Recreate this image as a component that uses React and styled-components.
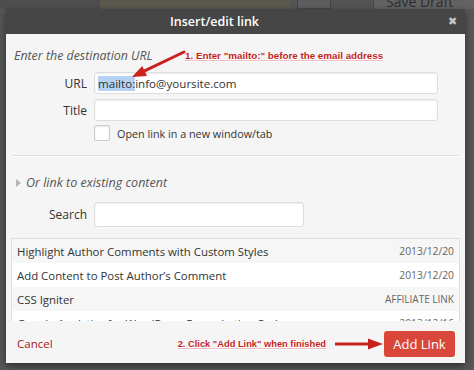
import React from 'react';
import styled, { createGlobalStyle } from 'styled-components';

const GlobalStyle = createGlobalStyle`
  html, body {
    margin: 0;
    padding: 0;
    background: #565656;
    font-family: "Open Sans", "Liberation Sans", sans-serif;
  }
  * { box-sizing: border-box; }
`;

const results = [
  { title: 'Highlight Author Comments with Custom Styles', info: '2013/12/20' },
  { title: 'Add Content to Post Author\u2019s Comment', info: '2013/12/20' },
  { title: 'CSS Igniter', info: 'AFFILIATE LINK', upper: true },
  { title: 'Google Analytics for WordPress Remarketing Code', info: '2013/12/16' },
];

const App = () => (
  <Page>
    <GlobalStyle />
    <TopStrip>
      <StripBlock $w={100} $bg="#4f4f4f" />
      <StripBlock $w={190} $bg="#5c5a4e" />
      <StripBlock $w={7} $bg="#555" />
      <StripButton $w={34} />
      <StripBlock $w={42} $bg="#555" />
      <SaveDraft>Save Draft</SaveDraft>
    </TopStrip>

    <Modal>
      <Header>
        <HeaderTitle>Insert/edit link</HeaderTitle>
        <Close>&#x2716;</Close>
      </Header>

      <Body>
        <HeadingRow>
          <Heading>Enter the destination URL</Heading>
          <Note>1. Enter "mailto:" before the email address</Note>
        </HeadingRow>

        <FieldRow>
          <Label>URL</Label>
          <Field $w={344} $h={22}>
            <Selected>mailto:</Selected>info@yoursite.com
          </Field>
        </FieldRow>
        <FieldRow $mt={5}>
          <Label>Title</Label>
          <Field $w={344} $h={22} />
        </FieldRow>
        <CheckRow>
          <Check />
          <CheckLabel>Open link in a new window/tab</CheckLabel>
        </CheckRow>

        <Separator />

        <Toggle>
          <Triangle />
          <ToggleText>Or link to existing content</ToggleText>
        </Toggle>

        <FieldRow $mt={11}>
          <Label>Search</Label>
          <Field $w={210} $h={25} />
        </FieldRow>

        <Results>
          {results.map((r, i) => (
            <ResultRow key={r.title} $alt={i % 2 === 0}>
              <ResultTitle>{r.title}</ResultTitle>
              <ResultInfo $upper={r.upper}>{r.info}</ResultInfo>
            </ResultRow>
          ))}
        </Results>

        <ArrowOne width="64" height="40" viewBox="0 0 64 40">
          <line x1="54" y1="3" x2="14.6" y2="21.9" stroke="#c9211d" strokeWidth="3" strokeLinecap="round" />
          <polygon points="2,28 17,26.9 12.2,17" fill="#c9211d" />
        </ArrowOne>
      </Body>

      <Footer>
        <Cancel>Cancel</Cancel>
        <FooterRight>
          <Note $size={9.3}>2. Click "Add Link" when finished</Note>
          <svg width="48" height="12" viewBox="0 0 48 12">
            <line x1="1" y1="6" x2="35" y2="6" stroke="#c9211d" strokeWidth="3" strokeLinecap="round" />
            <polygon points="33,0.5 48,6 33,11.5" fill="#c9211d" />
          </svg>
          <AddButton>Add Link</AddButton>
        </FooterRight>
      </Footer>
    </Modal>
  </Page>
);

export default App;

const Page = styled.div`
  width: 474px;
  height: 370px;
  overflow: hidden;
  background: #585858;
`;

const TopStrip = styled.div`
  display: flex;
  height: 9px;
  background: #555;
`;

const StripBlock = styled.div`
  width: ${(p) => p.$w}px;
  background: ${(p) => p.$bg};
`;

const StripButton = styled.div`
  width: ${(p) => p.$w}px;
  background: #5e5e5e;
  border: 1px solid #484848;
  border-top: none;
`;

const SaveDraft = styled.div`
  flex: 1;
  height: 9px;
  overflow: hidden;
  background: #636363;
  border-left: 1px solid #4a4a4a;
  color: #2e2e2e;
  font-size: 14px;
  line-height: 1;
  padding-left: 12px;
  display: flex;
  align-items: flex-end;
`;

const Modal = styled.div`
  position: relative;
  margin-left: 6px;
  width: 459px;
  height: 354px;
  background: #f5f5f5;
  box-shadow: 0 3px 8px rgba(0, 0, 0, 0.5);
  display: flex;
  flex-direction: column;
`;

const Header = styled.div`
  height: 25px;
  background: #464646;
  display: flex;
  align-items: center;
  justify-content: center;
  position: relative;
  padding-right: 42px;
`;

const HeaderTitle = styled.div`
  color: #fff;
  font-size: 12.5px;
  font-weight: 600;
`;

const Close = styled.span`
  position: absolute;
  right: 8px;
  top: 6px;
  color: #c4c4c4;
  font-size: 11px;
  line-height: 1;
`;

const Body = styled.div`
  position: relative;
  padding: 0 5px;
  display: flex;
  flex-direction: column;
`;

const HeadingRow = styled.div`
  display: flex;
  align-items: center;
  height: 38px;
  padding: 4px 0 0 3px;
`;

const Heading = styled.div`
  font-style: italic;
  font-size: 12.4px;
  color: #555;
  width: 171px;
`;

const Note = styled.span`
  font-family: "Liberation Sans", Arial, sans-serif;
  font-weight: bold;
  font-size: ${(p) => p.$size || 9.8}px;
  color: #c41f1c;
  text-shadow: 0 0 1px #fff, 0 1px 0 #fff;
  text-decoration: underline;
  text-decoration-color: rgba(200, 40, 40, 0.3);
  white-space: nowrap;
`;

const FieldRow = styled.div`
  display: flex;
  align-items: center;
  gap: 7px;
  margin-top: ${(p) => p.$mt || 0}px;
`;

const Label = styled.label`
  width: 76px;
  text-align: right;
  font-size: 12px;
  color: #333;
`;

const Field = styled.div`
  width: ${(p) => p.$w}px;
  height: ${(p) => p.$h}px;
  background: #fff;
  border: 1px solid #ddd;
  border-radius: 3px;
  box-shadow: inset 0 1px 2px rgba(0, 0, 0, 0.07);
  font-size: 11.6px;
  color: #333;
  display: flex;
  align-items: center;
  padding-left: 3px;
  white-space: nowrap;
`;

const Selected = styled.span`
  background: #b5d2f5;
`;

const CheckRow = styled.div`
  display: flex;
  align-items: center;
  gap: 7px;
  margin: 4px 0 0 83px;
`;

const Check = styled.span`
  width: 16px;
  height: 16px;
  background: #fff;
  border: 1px solid #ccc;
  border-radius: 2px;
  box-shadow: inset 0 1px 2px rgba(0, 0, 0, 0.1);
`;

const CheckLabel = styled.span`
  font-size: 10.8px;
  color: #333;
`;

const Separator = styled.div`
  margin: 14px 1px 0;
  height: 2px;
  border-top: 1px solid #dfdfdf;
  border-bottom: 1px solid #fff;
`;

const Toggle = styled.div`
  display: flex;
  align-items: center;
  gap: 5px;
  margin-top: 17px;
  padding-left: 5px;
`;

const Triangle = styled.span`
  width: 0;
  height: 0;
  border-left: 5px solid #b4b4b4;
  border-top: 4px solid transparent;
  border-bottom: 4px solid transparent;
`;

const ToggleText = styled.span`
  font-style: italic;
  font-size: 12.5px;
  color: #555;
`;

const Results = styled.div`
  margin-top: 11px;
  height: 83px;
  overflow: hidden;
  background: #fff;
  border: 1px solid #dedede;
  border-bottom: none;
`;

const ResultRow = styled.div`
  display: flex;
  justify-content: space-between;
  align-items: center;
  height: 24px;
  padding: 0 5px;
  background: ${(p) => (p.$alt ? '#f6f6f6' : '#fff')};
`;

const ResultTitle = styled.span`
  font-size: 11.4px;
  color: #333;
  white-space: nowrap;
`;

const ResultInfo = styled.span`
  font-size: ${(p) => (p.$upper ? 10 : 10.3)}px;
  color: #666;
  white-space: nowrap;
`;

const ArrowOne = styled.svg`
  position: absolute;
  left: 124px;
  top: 15px;
  pointer-events: none;
`;

const Footer = styled.div`
  flex: 1;
  display: flex;
  align-items: center;
  justify-content: space-between;
  padding: 3px 10px 0 11px;
`;

const Cancel = styled.a`
  font-size: 11.5px;
  color: #a3201f;
`;

const FooterRight = styled.div`
  display: flex;
  align-items: center;

  svg {
    margin: 0 1px 0 9px;
  }
`;

const AddButton = styled.button`
  width: 71px;
  height: 26px;
  border: none;
  border-radius: 3px;
  background: #d9473a;
  color: #fff;
  font-family: "Open Sans", sans-serif;
  font-size: 13px;
  padding: 0;
`;
